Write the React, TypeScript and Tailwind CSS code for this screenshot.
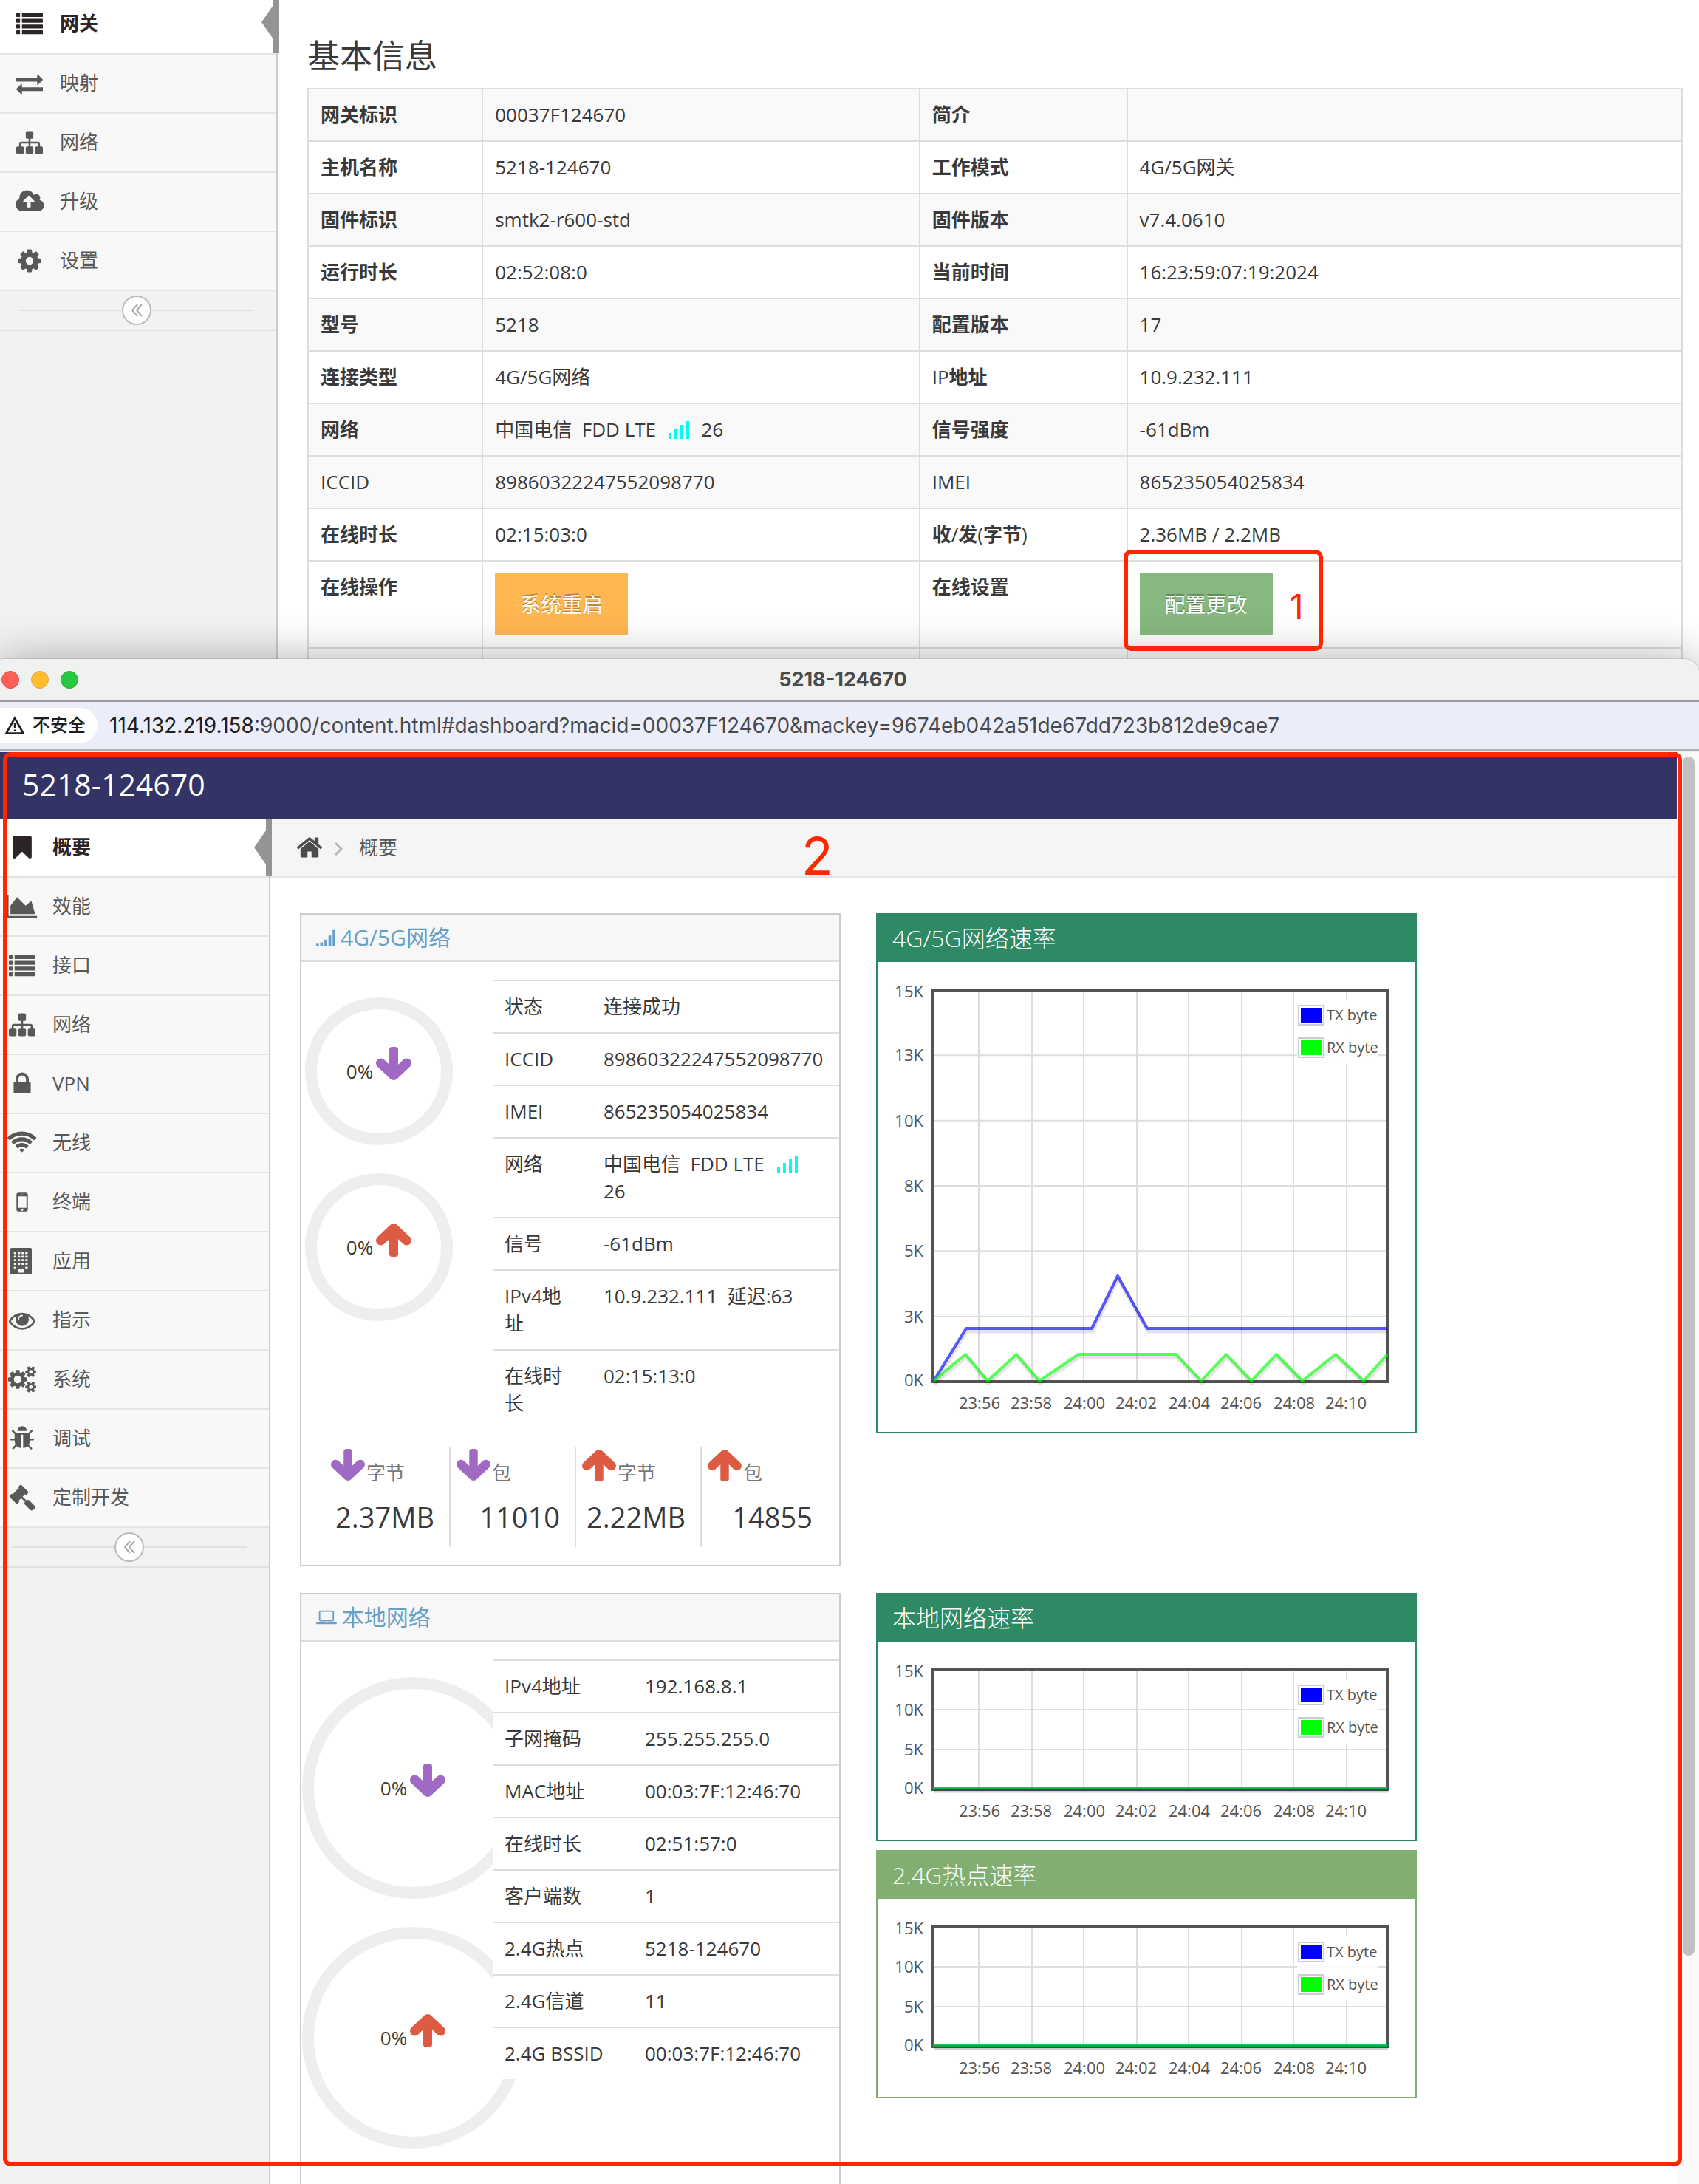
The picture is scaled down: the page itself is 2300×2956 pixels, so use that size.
import React from "react";

type Glyph = { w: number; h?: number; body: React.ReactNode };

const p = (w: number, d: string): Glyph => ({ w, body: <path d={d} /> });

const smallGear =
  "v140q0 16-149 31-12 27-30 52 51 113 51 138 0 4-4 7-122 71-124 71-8 0-46-47t-52-68q-20 2-30 2t-30-2q-14 21-52 68t-46 47q-2 0-124-71-4-3-4-7 0-25 51-138-18-25-30-52-149-15-149-31v-140q0-16 149-31 13-29 30-52-51-113-51-138 0-4 4-7 4-2 35-20t59-34 30-16q8 0 46 46.5t52 67.5q20-2 30-2t30 2q51-71 92-112l6-2q4 0 124 70 4 3 4 7 0 25-51 138 17 23 30 52 149 15 149 31z";

const glyphs = {
  list: {
    w: 1792,
    body: [192, 576, 960, 1344].map((y) => (
      <React.Fragment key={y}>
        <rect x="0" y={y} width="256" height="256" rx="32" />
        <rect x="384" y={y} width="1408" height="256" rx="32" />
      </React.Fragment>
    )),
  } as Glyph,
  exchange: p(
    1792,
    "M1792 1184v192q0 13-9.5 22.5t-22.5 9.5h-1376v192q0 13-9.5 22.5t-22.5 9.5q-12 0-24-10l-319-320q-9-9-9-22 0-14 9-23l320-320q9-9 23-9 13 0 22.5 9.5t9.5 22.5v192h1376q13 0 22.5 9.5t9.5 22.5zm0-544q0 14-9 23l-320 320q-9 9-23 9-13 0-22.5-9.5t-9.5-22.5v-192h-1376q-13 0-22.5-9.5t-9.5-22.5v-192q0-13 9.5-22.5t22.5-9.5h1376v-192q0-14 9-23t23-9q12 0 24 10l319 319q9 9 9 23z"
  ),
  sitemap: p(
    1792,
    "M1792 1248v320q0 40-28 68t-68 28h-320q-40 0-68-28t-28-68v-320q0-40 28-68t68-28h96v-192h-512v192h96q40 0 68 28t28 68v320q0 40-28 68t-68 28h-320q-40 0-68-28t-28-68v-320q0-40 28-68t68-28h96v-192h-512v192h96q40 0 68 28t28 68v320q0 40-28 68t-68 28h-320q-40 0-68-28t-28-68v-320q0-40 28-68t68-28h96v-192q0-52 38-90t90-38h512v-192h-96q-40 0-68-28t-28-68v-320q0-40 28-68t68-28h320q40 0 68 28t28 68v320q0 40-28 68t-68 28h-96v192h512q52 0 90 38t38 90v192h96q40 0 68 28t28 68z"
  ),
  cloud: p(
    1920,
    "M1280 864q0-14-9-23l-352-352q-9-9-23-9t-23 9l-351 351q-10 12-10 24 0 14 9 23t23 9h224v352q0 13 9.5 22.5t22.5 9.5h192q13 0 22.5-9.5t9.5-22.5v-352h224q13 0 22.5-9.5t9.5-22.5zm640 288q0 159-112.5 271.5t-271.5 112.5h-1088q-185 0-316.5-131.5t-131.5-316.5q0-130 70-240t188-165q-2-30-2-43 0-212 150-362t362-150q156 0 285.5 87t188.5 231q71-62 166-62 106 0 181 75t75 181q0 76-41 138 130 31 213.5 135.5t83.5 238.5z"
  ),
  cog: p(
    1792,
    "M1152 896q0-106-75-181t-181-75-181 75-75 181 75 181 181 75 181-75 75-181zm512-109v222q0 12-8 23t-20 13l-185 28q-19 54-39 91 35 50 107 138 10 12 10 25t-9 23q-27 37-99 108t-94 71q-12 0-26-9l-138-108q-44 23-91 38-16 136-29 186-7 28-36 28h-222q-14 0-24.5-8.5t-11.5-21.5l-28-184q-49-16-90-37l-141 107q-10 9-25 9-14 0-25-11-126-114-165-168-7-10-7-23 0-12 8-23 15-21 51-66.5t54-70.5q-27-50-41-99l-183-27q-13-2-21-12.5t-8-23.5v-222q0-12 8-23t19-13l186-28q14-46 39-92-40-57-107-138-10-12-10-24 0-10 9-23 26-36 98.5-107.5t94.5-71.5q13 0 26 10l138 107q44-23 91-38 16-136 29-186 7-28 36-28h222q14 0 24.5 8.5t11.5 21.5l28 184q49 16 90 37l142-107q9-9 24-9 13 0 25 10 129 119 165 170 7 8 7 22 0 12-8 23-15 21-51 66.5t-54 70.5q26 50 41 98l183 28q13 2 21 12.5t8 23.5z"
  ),
  bookmark: p(
    1792,
    "M1420 128q23 0 44 9 33 13 52.5 41t19.5 62v1289q0 34-19.5 62t-52.5 41q-19 8-44 8-48 0-83-32l-441-424-441 424q-36 33-83 33-23 0-44-9-33-13-52.5-41t-19.5-62v-1289q0-34 19.5-62t52.5-41q21-9 44-9h1048z"
  ),
  area: p(2048, "M2048 1536v128h-2048v-1536h128v1408h1920zm-384-1024l256 896h-1664v-576l448-576 576 576z"),
  lock: p(
    1792,
    "M640 768h512v-192q0-106-75-181t-181-75-181 75-75 181v192zm832 96v576q0 40-28 68t-68 28h-960q-40 0-68-28t-28-68v-576q0-40 28-68t68-28h32v-192q0-184 132-316t316-132 316 132 132 316v192h32q40 0 68 28t28 68z"
  ),
  wifi: p(
    2048,
    "M1024 1523q-20 0-93-73.5t-73-93.5q0-32 62.5-54t103.5-22 103.5 22 62.5 54q0 20-73 93.5t-93 73.5zm270-271q-2 0-40-25t-101.5-50-128.5-25-128.5 25-101 50-40.5 25q-18 0-93.5-75t-75.5-93q0-13 10-23 78-77 196-121t233-44 233 44 196 121q10 10 10 23 0 18-75.5 93t-93.5 75zm273-272q-11 0-23-8-136-105-252-154.5t-268-49.5q-85 0-170.5 22t-149 53-113.5 62-79 53-31 22q-17 0-92-75t-75-93q0-12 10-22 132-132 320-205t380-73 380 73 320 205q10 10 10 22 0 18-75 93t-92 75zm271-271q-11 0-22-9-179-157-371.5-236.5t-420.5-79.5-420.5 79.5-371.5 236.5q-11 9-22 9-17 0-92.5-75t-75.5-93q0-13 10-23 187-186 445-288t527-102 527 102 445 288q10 10 10 23 0 18-75.5 93t-92.5 75z"
  ),
  mobile: p(
    1792,
    "M976 1408q0-33-23.5-56.5t-56.5-23.5-56.5 23.5-23.5 56.5 23.5 56.5 56.5 23.5 56.5-23.5 23.5-56.5zm208-160v-704q0-13-9.5-22.5t-22.5-9.5h-512q-13 0-22.5 9.5t-9.5 22.5v704q0 13 9.5 22.5t22.5 9.5h512q13 0 22.5-9.5t9.5-22.5zm-192-848q0-16-16-16h-160q-16 0-16 16t16 16h160q16 0 16-16zm288-16v1024q0 52-38 90t-90 38h-512q-52 0-90-38t-38-90v-1024q0-52 38-90t90-38h512q52 0 90 38t38 90z"
  ),
  building: {
    w: 32,
    h: 36,
    body: (
      <>
        <rect x="0" y="0" width="29" height="36" rx="1.5" />
        <g fill="#f8f8f8">
          {[5.6, 10.5, 15.3, 20.2, 25.4].map((y, r) =>
            [4.7, 10, 15.1, 20.2]
              .filter((_, c) => r < 4 || c === 0 || c === 3)
              .map((x) => <rect key={`${x}-${y}`} x={x} y={y} width="3.3" height="2.8" rx="0.8" />)
          )}
          <rect x="10" y="28.7" width="8.6" height="4.8" />
        </g>
      </>
    ),
  } as Glyph,
  eye: p(
    1792,
    "M1664 960q-152-236-381-353 61 104 61 225 0 185-131.5 316.5t-316.5 131.5-316.5-131.5-131.5-316.5q0-121 61-225-229 117-381 353 133 205 333.5 326.5t434.5 121.5 434.5-121.5 333.5-326.5zm-720-384q0-20-14-34t-34-14q-125 0-214.5 89.5t-89.5 214.5q0 20 14 34t34 14 34-14 14-34q0-86 61-147t147-61q20 0 34-14t14-34zm848 384q0 34-20 69-140 230-376.5 368.5t-499.5 138.5-499.5-139-376.5-368q-20-35-20-69t20-69q140-229 376.5-368t499.5-139 499.5 139 376.5 368q20 35 20 69z"
  ),
  cogs: p(
    1920,
    "M896 896q0-106-75-181t-181-75-181 75-75 181 75 181 181 75 181-75 75-181zm768 512q0-52-38-90t-90-38-90 38-38 90q0 53 37.5 90.5t90.5 37.5 90.5-37.5 37.5-90.5zm0-1024q0-52-38-90t-90-38-90 38-38 90q0 53 37.5 90.5t90.5 37.5 90.5-37.5 37.5-90.5zm-384 421v185q0 10-7 19.5t-16 10.5l-155 24q-11 35-32 76 34 48 90 115 7 11 7 20 0 12-7 19-23 30-82.5 89.5t-78.5 59.5q-11 0-21-7l-115-90q-37 19-77 31-11 108-23 155-7 24-30 24h-186q-11 0-20-7.5t-10-17.5l-23-153q-34-10-75-31l-118 89q-7 7-20 7-11 0-21-8-144-133-144-160 0-9 7-19 10-14 41-53t47-61q-23-44-35-82l-152-24q-10-1-17-9.5t-7-19.5v-185q0-10 7-19.5t16-10.5l155-24q11-35 32-76-34-48-90-115-7-11-7-20 0-12 7-20 22-30 82-89t79-59q11 0 21 7l115 90q34-18 77-32 11-108 23-154 7-24 30-24h186q11 0 20 7.5t10 17.5l23 153q34 10 75 31l118-89q8-7 20-7 11 0 21 8 144 133 144 160 0 8-7 19-12 16-42 54t-45 60q23 48 34 82l152 23q10 2 17 10.5t7 19.5zM1920 1338" +
      smallGear +
      "M1920 314" +
      smallGear
  ),
  bug: p(
    1792,
    "M1696 960q0 26-19 45t-45 19h-224q0 171-67 290l208 209q19 19 19 45t-19 45q-18 19-45 19t-45-19l-198-197q-5 5-15 13t-42 28.5-65 36.5-82 29-97 13v-896h-128v896q-51 0-101.5-13.5t-87-33-66-39-43.5-32.5l-15-14-183 207q-20 21-48 21-24 0-43-16-19-18-20.5-44.5t15.5-46.5l202-227q-58-114-58-274h-224q-26 0-45-19t-19-45 19-45 45-19h224v-294l-173-173q-19-19-19-45t19-45 45-19 45 19l173 173h844l173-173q19-19 45-19t45 19 19 45-19 45l-173 173v294h224q26 0 45 19t19 45zm-480-576h-640q0-133 93.5-226.5t226.5-93.5 226.5 93.5 93.5 226.5z"
  ),
  gavel: p(
    1792,
    "M1771 1536q0 53-37 90l-107 108q-39 37-91 37-53 0-90-37l-363-364q-38-36-38-90 0-53 43-96l-256-256-126 126q-14 14-34 14t-34-14q2 2 12.5 12t12.5 13 10 11.5 10 13.5 6 13.5 5.5 16.5 1.5 18q0 38-28 68-3 3-16.5 18t-19 20.5-18.5 16.5-22 15.5-22 9-26 4.5q-40 0-68-28l-408-408q-28-28-28-68 0-13 4.5-26t9-22 15.5-22 16.5-18.5 20.5-19 18-16.5q30-28 68-28 10 0 18 1.5t16.5 5.5 13.5 6 13.5 10 11.5 10 13 12.5 12 12.5q-14-14-14-34t14-34l348-348q14-14 34-14t34 14q-2-2-12.5-12t-12.5-13-10-11.5-10-13.5-6-13.5-5.5-16.5-1.5-18q0-38 28-68 3-3 16.5-18t19-20.5 18.5-16.5 22-15.5 22-9 26-4.5q40 0 68 28l408 408q28 28 28 68 0 13-4.5 26t-9 22-15.5 22-16.5 18.5-20.5 19-18 16.5q-30 28-68 28-10 0-18-1.5t-16.5-5.5-13.5-6-13.5-10-11.5-10-13-12.5-12-12.5q14 14 14 34t-14 34l-126 126 256 256q43-43 96-43 52 0 91 37l363 363q37 39 37 91z"
  ),
  home: p(
    1792,
    "M1472 992v480q0 26-19 45t-45 19h-384v-384h-256v384h-384q-26 0-45-19t-19-45v-480q0-1 .5-3t.5-3l575-474 575 474q1 2 1 6zm223-69l-62 74q-8 9-21 11h-3q-13 0-21-7l-692-577-692 577q-12 8-24 7-13-2-21-11l-62-74q-8-10-7-23.5t11-21.5l719-599q32-26 76-26t76 26l244 204v-195q0-14 9-23t23-9h192q14 0 23 9t9 23v408l219 182q10 8 11 21.5t-7 23.5z"
  ),
  signal: {
    w: 1792,
    body: (
      <>
        <rect x="0" y="1472" width="256" height="192" />
        <rect x="384" y="1344" width="256" height="320" />
        <rect x="768" y="1088" width="256" height="576" />
        <rect x="1152" y="704" width="256" height="960" />
        <rect x="1536" y="192" width="256" height="1472" />
      </>
    ),
  } as Glyph,
  laptop: p(
    1920,
    "M416 1280q-66 0-113-47t-47-113v-704q0-66 47-113t113-47h1088q66 0 113 47t47 113v704q0 66-47 113t-113 47h-1088zm-32-864v704q0 13 9.5 22.5t22.5 9.5h1088q13 0 22.5-9.5t9.5-22.5v-704q0-13-9.5-22.5t-22.5-9.5h-1088q-13 0-22.5 9.5t-9.5 22.5zm1376 928h160v96q0 40-47 68t-113 28h-1600q-66 0-113-28t-47-68v-96h1760zm-720 96q16 0 16-16t-16-16h-160q-16 0-16 16t16 16h160z"
  ),
};

type GlyphName = keyof typeof glyphs;

function Icon({ name, className }: { name: GlyphName; className: string }) {
  const g = glyphs[name];
  return (
    <svg viewBox={`0 0 ${g.w} ${g.h ?? 1792}`} fill="currentColor" aria-hidden="true" className={`w-auto shrink-0 ${className}`}>
      {g.body}
    </svg>
  );
}

function Arrow({ up, className = "" }: { up?: boolean; className?: string }) {
  return (
    <svg
      viewBox="0 0 48 46"
      aria-hidden="true"
      className={`shrink-0 ${up ? "text-[#dd5a43]" : "text-[#a069c3]"} ${className}`}
    >
      <g transform={up ? "rotate(180 24 23)" : undefined}>
        <rect x="18" y="0" width="12" height="38" rx="4" fill="currentColor" />
        <path
          d="M6.5 22L24 38.5L41.5 22"
          fill="none"
          stroke="currentColor"
          strokeWidth="13"
          strokeLinecap="round"
          strokeLinejoin="round"
        />
      </g>
    </svg>
  );
}

function Bars() {
  return (
    <svg viewBox="0 0 28 24" aria-hidden="true" className="mx-[10px] inline-block h-6 w-7 align-[-3px]" fill="#00ffe8">
      <rect x="0" y="16" width="4" height="8" />
      <rect x="8" y="10" width="4" height="14" />
      <rect x="16" y="5" width="4" height="19" />
      <rect x="24" y="0" width="4" height="24" />
    </svg>
  );
}

function Carrier() {
  return (
    <>
      中国电信&nbsp; FDD LTE&nbsp;
      <Bars /> 26
    </>
  );
}

type Item = { icon: GlyphName; label: string };

function Sidebar({ items, clipped, wide }: { items: Item[]; clipped?: boolean; wide?: boolean }) {
  return (
    <nav className={`shrink-0 border-r-2 border-[#cccccc] bg-[#f2f2f2] ${wide ? "w-[376px]" : "w-[366px]"}`}>
      <ul>
        {items.map((it, i) => (
          <li
            key={it.label}
            className={`relative border-b-2 border-[#e5e5e5] ${i === 0 ? "bg-white text-[#2b2526]" : "bg-[#f8f8f8] text-[#585858]"} ${
              i === 0 && clipped ? "h-[74px]" : "h-20"
            }`}
          >
            <a
              href="#"
              className={`flex h-full items-center ${wide ? "pl-[14px]" : "pl-1"} ${i === 0 && clipped ? "pb-2" : ""}`}
            >
              <span className="flex w-[52px] justify-center">
                <Icon name={it.icon} className="h-9" />
              </span>
              <span className={`ml-[15px] pb-[2px] text-[26px] leading-[36px] ${i === 0 ? "font-bold" : ""}`}>
                {it.label}
              </span>
            </a>
            {i === 0 && (
              <span className="absolute top-0 -right-1 bottom-0 w-2 bg-[#949494]">
                <svg
                  viewBox="0 0 16 46"
                  aria-hidden="true"
                  className={`absolute right-2 h-[46px] w-4 ${clipped ? "top-[7px]" : "top-4"}`}
                  fill="#949494"
                >
                  <path d="M0 23L16 0V46Z" />
                </svg>
              </span>
            )}
          </li>
        ))}
      </ul>
      <div
        className={`flex h-[54px] items-center border-b-2 border-[#e0e0e0] ${wide ? "pr-[30px] pl-[26px]" : "pr-[30px] pl-4"}`}
      >
        <span className="h-[2px] flex-1 bg-[#e0e0e0]" />
        <button
          type="button"
          aria-label="收起菜单"
          className="flex size-10 items-center justify-center rounded-full border-2 border-[#bbbbbb] bg-white"
        >
          <svg viewBox="0 0 16 18" aria-hidden="true" className="h-[18px] w-4" fill="none" stroke="#aaaaaa" strokeWidth="2">
            <path d="M9 1L2 9L9 17M15 1L8 9L15 17" />
          </svg>
        </button>
        <span className="h-[2px] flex-1 bg-[#e0e0e0]" />
      </div>
    </nav>
  );
}

/* Chinese runs of a label are bold, Latin runs stay regular. */
function Label({ text }: { text: string }) {
  return (
    <>
      {text.split(/([\u4e00-\u9fff]+)/).map((part, i) => (i % 2 ? <b key={i}>{part}</b> : part))}
    </>
  );
}

const info: { row: [string, React.ReactNode, string, React.ReactNode]; shade: boolean }[] = [
  { row: ["网关标识", "00037F124670", "简介", ""], shade: true },
  { row: ["主机名称", "5218-124670", "工作模式", "4G/5G网关"], shade: false },
  { row: ["固件标识", "smtk2-r600-std", "固件版本", "v7.4.0610"], shade: true },
  { row: ["运行时长", "02:52:08:0", "当前时间", "16:23:59:07:19:2024"], shade: false },
  { row: ["型号", "5218", "配置版本", "17"], shade: true },
  { row: ["连接类型", "4G/5G网络", "IP地址", "10.9.232.111"], shade: false },
  { row: ["网络", <Carrier key="c" />, "信号强度", "-61dBm"], shade: true },
  { row: ["ICCID", "89860322247552098770", "IMEI", "865235054025834"], shade: true },
  { row: ["在线时长", "02:15:03:0", "收/发(字节)", "2.36MB / 2.2MB"], shade: false },
];

const cell = "border-2 border-[#dddddd] px-4 py-4 text-left align-top font-normal leading-[37px]";

function InfoTable() {
  return (
    <table className="w-full table-fixed border-collapse text-[26px] text-[#393939]">
      <colgroup>
        <col className="w-[12.7%]" />
        <col className="w-[31.8%]" />
        <col className="w-[15.1%]" />
        <col />
      </colgroup>
      <tbody>
        {info.map(({ row, shade }) => (
          <tr key={row[0]} className={shade ? "bg-[#f9f9f9]" : ""}>
            <th scope="row" className={cell}>
              <Label text={row[0]} />
            </th>
            <td className={cell}>{row[1]}</td>
            <th scope="row" className={cell}>
              <Label text={row[2]} />
            </th>
            <td className={cell}>{row[3]}</td>
          </tr>
        ))}
        <tr>
          <th scope="row" className={cell}>
            <Label text="在线操作" />
          </th>
          <td className={cell}>
            <button
              type="button"
              className="block h-[84px] w-[180px] bg-[#ffb752] text-[28px] text-white [text-shadow:0_-2px_0_rgba(0,0,0,0.25)]"
            >
              系统重启
            </button>
          </td>
          <th scope="row" className={cell}>
            <Label text="在线设置" />
          </th>
          <td className={`${cell} relative`}>
            <button
              type="button"
              className="block h-[84px] w-[180px] bg-[#87b87f] text-[28px] text-white [text-shadow:0_-2px_0_rgba(0,0,0,0.25)]"
            >
              配置更改
            </button>
            <div className="absolute -top-4 -left-[6px] z-20 flex h-[137px] w-[270px] items-center justify-end rounded-[10px] border-[6px] border-[#ff2600] pt-4 pr-5">
              <span className="font-['Inter',sans-serif] text-[46px] leading-none text-[#ff2600]">1</span>
            </div>
          </td>
        </tr>
        <tr className="h-[15px]">
          {[0, 1, 2, 3].map((i) => (
            <td key={i} className="border-x-2 border-t-2 border-[#dddddd]" />
          ))}
        </tr>
      </tbody>
    </table>
  );
}

function Ring({ up, big }: { up?: boolean; big?: boolean }) {
  return (
    <div
      className={`flex shrink-0 items-center justify-center rounded-full border-[16px] border-[#eeeeee] ${big ? "size-[300px]" : "size-[200px]"}`}
    >
      <span className="text-[26px] text-[#393939]">0%</span>
      <Arrow up={up} className="mb-5 ml-1 h-[46px] w-12" />
    </div>
  );
}

function Card({
  icon,
  title,
  rows,
  big,
  children,
}: {
  icon: GlyphName;
  title: string;
  rows: [string, React.ReactNode][];
  big?: boolean;
  children?: React.ReactNode;
}) {
  return (
    <section className={`border-2 border-[#cccccc] bg-white ${big ? "min-h-[820px] border-b-0" : ""}`}>
      <h2 className="flex h-16 items-center gap-[7px] border-b-2 border-[#dddddd] bg-[#f7f7f7] pl-5 text-[30px] leading-none text-[#669fc7]">
        <Icon name={icon} className="h-[26px]" />
        {title}
      </h2>
      <div className="flex items-start">
        <div className={`flex w-[259px] shrink-0 flex-col gap-[38px] pt-12 ${big ? "pl-px" : "pl-[5px]"}`}>
          <Ring big={big} />
          <Ring big={big} up />
        </div>
        <div className="relative mt-6 min-w-0 flex-1 bg-white">
          <table className="w-full table-fixed border-collapse text-[26px] text-[#393939]">
            <colgroup>
              <col className={big ? "w-[190px]" : "w-[134px]"} />
              <col />
            </colgroup>
            <tbody>
              {rows.map(([k, v]) => (
                <tr key={k} className="border-t-2 border-[#dddddd]">
                  <th scope="row" className="py-4 pr-4 pl-4 text-left align-top leading-[37px] font-normal">
                    {k}
                  </th>
                  <td className="px-4 py-4 align-top leading-[37px]">{v}</td>
                </tr>
              ))}
            </tbody>
          </table>
        </div>
      </div>
      {children}
    </section>
  );
}

const stats = [
  { up: false, label: "字节", value: "2.37MB" },
  { up: false, label: "包", value: "11010" },
  { up: true, label: "字节", value: "2.22MB" },
  { up: true, label: "包", value: "14855" },
];

function Stats() {
  return (
    <div className="mt-6 mb-6 flex pl-8">
      {stats.map((s, i) => (
        <div key={i} className={`h-[136px] w-[170px] ${i < 3 ? "border-r-2 border-[#dddddd]" : ""}`}>
          <div className="flex h-[60px] items-start pl-2">
            <Arrow up={s.up} className="mt-[3px] h-[44px] w-[46px]" />
            <span className="mt-4 ml-[2px] text-[26px] leading-[38px] text-[#777777]">{s.label}</span>
          </div>
          <div className="pt-2 pr-5 text-right text-[38px] leading-[54px] text-[#393939]">{s.value}</div>
        </div>
      ))}
    </div>
  );
}

const gridX = [137, 209, 279, 351, 421, 493, 563, 635];
const timeX = [138, 208, 280, 350, 422, 492, 564, 634];
const times = ["23:56", "23:58", "24:00", "24:02", "24:04", "24:06", "24:08", "24:10"];

function Chart({
  title,
  tone,
  bottom,
  ticks,
  lines,
}: {
  title: string;
  tone: "deep" | "light";
  bottom: number;
  ticks: string[];
  lines: { color: string; points: string }[];
}) {
  const top = 38;
  const step = (bottom - top) / (ticks.length - 1);
  return (
    <section className={`border-2 bg-white ${tone === "deep" ? "border-[#2e8965]" : "border-[#82af6f]"}`}>
      <h2
        className={`flex h-16 items-center pl-5 text-[32px] leading-none font-light text-white ${tone === "deep" ? "bg-[#2e8965]" : "bg-[#82af6f]"}`}
      >
        {title}
      </h2>
      <svg
        viewBox={`0 0 728 ${bottom + 68}`}
        className="block w-full font-['Open_Sans','Noto_Sans_CJK_SC',sans-serif] text-[22px]"
        fill="#545454"
        role="img"
        aria-label={title}
      >
        <g stroke="#dddddd" strokeWidth="2">
          {gridX.map((x) => (
            <line key={x} x1={x} x2={x} y1={top} y2={bottom} />
          ))}
          {ticks.slice(1, -1).map((t, i) => (
            <line key={t} x1="75" x2="690" y1={top + step * (i + 1)} y2={top + step * (i + 1)} />
          ))}
        </g>
        <rect x="75" y={top} width="615" height={bottom - top} fill="none" stroke="#545454" strokeWidth="4" />
        {lines.map((l) => (
          <g key={l.color} fill="none" strokeLinejoin="round">
            <polyline points={l.points} transform="translate(1 4)" stroke="#000000" strokeOpacity="0.1" strokeWidth="5" />
            <polyline points={l.points} stroke={l.color} strokeOpacity="0.65" strokeWidth="4" />
          </g>
        ))}
        {ticks.map((t, i) => (
          <text key={t} x="62" textAnchor="end" y={Math.round(top + step * i) + (i === 0 ? 10 : i === ticks.length - 1 ? 6 : 8)}>
            {t}
          </text>
        ))}
        {times.map((t, i) => (
          <text key={t} x={timeX[i]} y={bottom + 37} textAnchor="middle">
            {t}
          </text>
        ))}
        <rect x="568" y="50" width="110" height="88" fill="#ffffff" fillOpacity="0.85" />
        {[
          ["TX byte", "#0000ff"],
          ["RX byte", "#00ff00"],
        ].map(([name, color], i) => (
          <g key={name} className="text-[20px]">
            <rect x="570" y={59 + i * 44} width="34" height="26" fill="#ffffff" stroke="#cccccc" strokeWidth="2" />
            <rect x="573" y={62 + i * 44} width="28" height="20" fill={color} />
            <text x="608" y={79 + i * 44}>
              {name}
            </text>
          </g>
        ))}
      </svg>
    </section>
  );
}

const wanRows: [string, React.ReactNode][] = [
  ["状态", "连接成功"],
  ["ICCID", "89860322247552098770"],
  ["IMEI", "865235054025834"],
  ["网络", <Carrier key="c" />],
  ["信号", "-61dBm"],
  ["IPv4地址", <React.Fragment key="d">10.9.232.111&nbsp; 延迟:63</React.Fragment>],
  ["在线时长", "02:15:13:0"],
];

const lanRows: [string, React.ReactNode][] = [
  ["IPv4地址", "192.168.8.1"],
  ["子网掩码", "255.255.255.0"],
  ["MAC地址", "00:03:7F:12:46:70"],
  ["在线时长", "02:51:57:0"],
  ["客户端数", "1"],
  ["2.4G热点", "5218-124670"],
  ["2.4G信道", "11"],
  ["2.4G BSSID", "00:03:7F:12:46:70"],
];

const flat = (y: number) => [
  { color: "#0000ff", points: `75,${y} 690,${y}` },
  { color: "#00ff00", points: `75,${y} 690,${y}` },
];

const outerNav: Item[] = [
  { icon: "list", label: "网关" },
  { icon: "exchange", label: "映射" },
  { icon: "sitemap", label: "网络" },
  { icon: "cloud", label: "升级" },
  { icon: "cog", label: "设置" },
];

const innerNav: Item[] = [
  { icon: "bookmark", label: "概要" },
  { icon: "area", label: "效能" },
  { icon: "list", label: "接口" },
  { icon: "sitemap", label: "网络" },
  { icon: "lock", label: "VPN" },
  { icon: "wifi", label: "无线" },
  { icon: "mobile", label: "终端" },
  { icon: "building", label: "应用" },
  { icon: "eye", label: "指示" },
  { icon: "cogs", label: "系统" },
  { icon: "bug", label: "调试" },
  { icon: "gavel", label: "定制开发" },
];

export default function App() {
  return (
    <div className="flex h-screen flex-col overflow-hidden bg-white font-['Open_Sans','Noto_Sans_CJK_SC',sans-serif]">
      <div className="flex shrink-0">
        <Sidebar items={outerNav} clipped wide />
        <div className="min-w-0 flex-1 pr-[22px] pl-10">
          <h1 className="pt-[45px] pb-[14px] text-[44px] leading-[60px] text-[#393939]">基本信息</h1>
          <InfoTable />
        </div>
      </div>

      <div className="relative z-10 flex min-h-0 flex-1 flex-col rounded-tl-[4px] rounded-tr-[20px] bg-white shadow-[0_0_60px_rgba(0,0,0,0.32),0_0_2px_rgba(0,0,0,0.4)]">
        <div className="relative flex h-[58px] shrink-0 items-center justify-center rounded-tl-[4px] rounded-tr-[20px] border-b-2 border-[#9a9a9c] bg-[#f0f2f1] pr-[18px]">
          <div className="absolute left-[2px] flex gap-4">
            <button type="button" aria-label="关闭" className="size-6 rounded-full border border-[#e24b41] bg-[#ff5f57]" />
            <button type="button" aria-label="最小化" className="size-6 rounded-full border border-[#e1a73e] bg-[#febc2e]" />
            <button type="button" aria-label="全屏" className="size-6 rounded-full border border-[#2dac2f] bg-[#28c840]" />
          </div>
          <span className="font-['Inter',sans-serif] text-[27px] leading-8 font-bold text-[#4a4a4a]">5218-124670</span>
        </div>

        <div className="flex h-[66px] shrink-0 items-center border-b-2 border-[#b0b1b6] bg-[#ebedf8] font-['Inter','Noto_Sans_CJK_SC',sans-serif]">
          <button
            type="button"
            className="flex h-12 w-[132px] shrink-0 items-center rounded-l-[18px] rounded-r-full bg-white pl-[6px] text-[24px] font-medium text-[#1f1f1f]"
          >
            <svg viewBox="0 0 28 26" aria-hidden="true" className="mr-[10px] h-[26px] w-7 shrink-0">
              <path d="M14 3L25.500 23.500H2.500Z" fill="none" stroke="#1f1f1f" strokeWidth="2.600" />
              <path d="M14 9.500V16.500M14 18.500V21" stroke="#1f1f1f" strokeWidth="2.400" />
            </svg>
            不安全
          </button>
          <span className="ml-4 text-[28px] whitespace-nowrap text-[#47494d]">
            <span className="text-[#1f1f1f]">114.132.219.158</span>
            :9000/content.html#dashboard?macid=00037F124670&amp;mackey=9674eb042a51de67dd723b812de9cae7
          </span>
        </div>
        <div className="h-[2px] shrink-0 bg-[#e8e9f2]" />

        <div className="relative flex min-h-0 flex-1">
          <div className="flex min-w-0 flex-1 flex-col">
            <header className="flex h-[90px] shrink-0 items-center bg-[#333366] pb-1 pl-[30px] text-[41px] leading-none text-white">
              5218-124670
            </header>
            <div className="flex min-h-0 flex-1">
              <Sidebar items={innerNav} />
              <div className="min-w-0 flex-1">
                <div className="flex h-20 items-center border-b-2 border-[#e5e5e5] bg-[#f5f5f5] pl-[34px] text-[26px] text-[#555555]">
                  <a href="#" aria-label="首页">
                    <Icon name="home" className="h-[38px] text-[#4c4c4c]" />
                  </a>
                  <svg viewBox="0 0 12 18" aria-hidden="true" className="mt-1 mr-[22px] ml-[14px] h-[18px] w-3" fill="none" stroke="#b2b6bf" strokeWidth="3">
                    <path d="M2 1L10 9L2 17" />
                  </svg>
                  <span>概要</span>
                </div>
                <main className="grid grid-cols-[repeat(2,minmax(0,732px))] items-start gap-x-12 gap-y-9 pt-12 pr-10 pl-10">
                  <Card icon="signal" title="4G/5G网络" rows={wanRows}>
                    <Stats />
                  </Card>
                  <Chart
                    title="4G/5G网络速率"
                    tone="deep"
                    bottom={568}
                    ticks={["15K", "13K", "10K", "8K", "5K", "3K", "0K"]}
                    lines={[
                      { color: "#0000ff", points: "76,567 120,496 290,496 325,425 365,496 690,496" },
                      {
                        color: "#00ff00",
                        points:
                          "76,567 119,531 149,567 188,531 219,567 272,531 404,531 438,567 472,531 506,567 540,531 575,567 620,531 658,567 690,531",
                      },
                    ]}
                  />
                  <Card icon="laptop" title="本地网络" rows={lanRows} big />
                  <div className="flex flex-col gap-3">
                    <Chart title="本地网络速率" tone="deep" bottom={200} ticks={["15K", "10K", "5K", "0K"]} lines={flat(198)} />
                    <Chart title="2.4G热点速率" tone="light" bottom={200} ticks={["15K", "10K", "5K", "0K"]} lines={flat(198)} />
                  </div>
                </main>
              </div>
            </div>
          </div>
          <div className="w-[30px] shrink-0 bg-[#fafafa] pt-[6px] pl-2">
            <div className="h-[84%] w-4 rounded-full bg-[#c1c1c1]" />
          </div>
          <div className="pointer-events-none absolute top-0 right-[23px] bottom-6 left-1 rounded-[10px] border-[6px] border-[#ff2600] pt-[93px] pl-[1075px] font-['Inter',sans-serif] text-[70px] leading-[84px] text-[#ff2600]">
            2
          </div>
        </div>
      </div>
    </div>
  );
}
